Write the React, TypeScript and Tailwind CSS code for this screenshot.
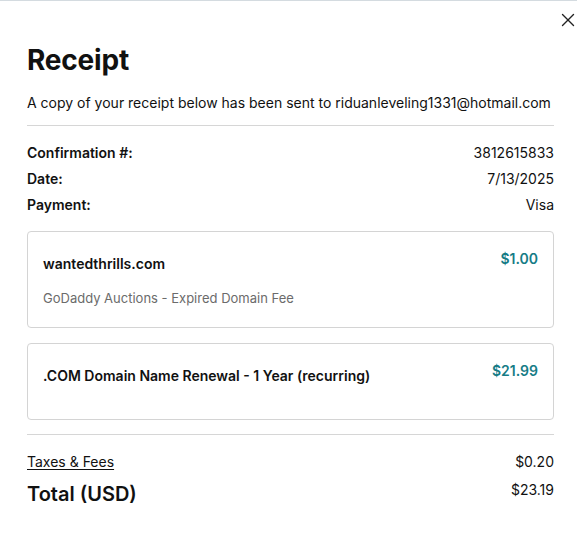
import { X } from 'lucide-react'

interface LineItem {
  title: string
  subtitle?: string
  price: string
}

const items: LineItem[] = [
  { title: 'wantedthrills.com', subtitle: 'GoDaddy Auctions - Expired Domain Fee', price: '$1.00' },
  { title: '.COM Domain Name Renewal - 1 Year (recurring)', price: '$21.99' },
]

const details = [
  { label: 'Confirmation #:', value: '3812615833' },
  { label: 'Date:', value: '7/13/2025' },
  { label: 'Payment:', value: 'Visa' },
]

function ItemCard({ item }: { item: LineItem }) {
  return (
    <div className="border border-[#d4d4d4] rounded-[4px] px-[15px] pt-[18px] pb-[21px] min-h-[77px]">
      <div className="flex justify-between items-start">
        <div className="flex flex-col">
          <span className="text-[14px] font-semibold text-[#111] pt-[5px] leading-[18px]">{item.title}</span>
          {item.subtitle && (
            <span className="text-[13px] text-[#6b6b6b] mt-[17px] leading-[16px]">{item.subtitle}</span>
          )}
        </div>
        <span className="text-[14px] font-semibold text-[#167c86] leading-[18px]">{item.price}</span>
      </div>
    </div>
  )
}

export default function App() {
  return (
    <div className="w-[577px] h-[533px] bg-white border-t border-[#d4dbe0] relative overflow-hidden font-['Inter',sans-serif] text-[#111]">
      {/* Close */}
      <button className="absolute top-[8px] right-[-2px] text-[#222]">
        <X size={22} strokeWidth={1.5} />
      </button>

      <div className="pl-[27px] pt-[42px]">
        <div className="w-[527px]">
          <h1 className="text-[28px] font-bold leading-[34px] tracking-[-0.2px]">Receipt</h1>
          <p className="text-[14px] mt-[17px] leading-[18px] whitespace-nowrap">
            A copy of your receipt below has been sent to riduanleveling1331@hotmail.com
          </p>

          <div className="h-px bg-[#d6d6d6] mt-[13px]" />

          {/* Details */}
          <div className="mt-[18px] flex flex-col gap-[8px]">
            {details.map((d) => (
              <div key={d.label} className="flex justify-between text-[14px] leading-[18px]">
                <span className="font-semibold">{d.label}</span>
                <span>{d.value}</span>
              </div>
            ))}
          </div>

          {/* Line items */}
          <div className="mt-[17px] flex flex-col gap-[15px]">
            {items.map((it) => (
              <ItemCard key={it.title} item={it} />
            ))}
          </div>

          <div className="h-px bg-[#d6d6d6] mt-[14px]" />

          {/* Totals */}
          <div className="mt-[18px] flex justify-between text-[14px] leading-[18px]">
            <span className="underline underline-offset-2">Taxes &amp; Fees</span>
            <span>$0.20</span>
          </div>
          <div className="mt-[10px] flex justify-between items-start">
            <span className="text-[20px] font-semibold leading-[26px]">Total (USD)</span>
            <span className="text-[14px] leading-[18px]">$23.19</span>
          </div>
        </div>
      </div>
    </div>
  )
}
